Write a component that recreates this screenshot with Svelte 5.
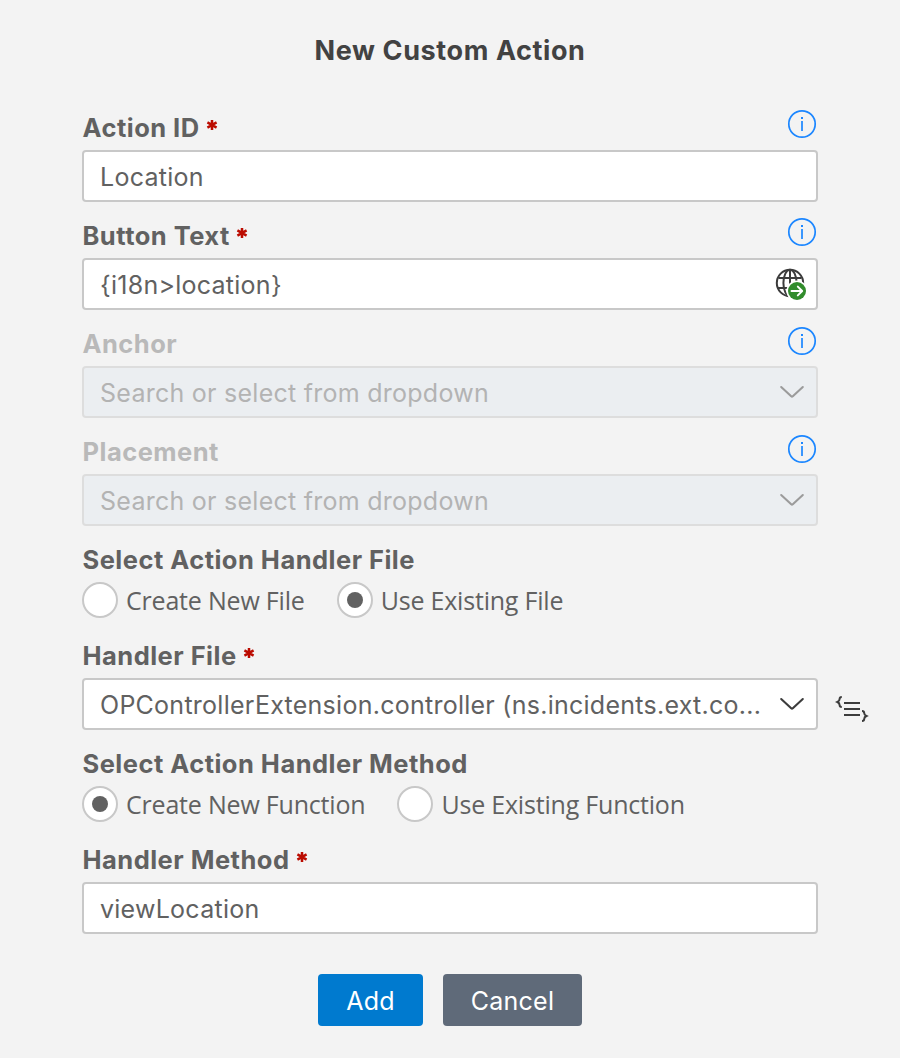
<script>
  let handlerFile = $state('existing');
  let handlerMethod = $state('new');
</script>

{#snippet info(drop)}
  <svg class="info" class:drop width="30" height="30" viewBox="0 0 30 30" fill="none" stroke="#1b86ff">
    <circle cx="15" cy="15" r="13.2" stroke-width="1.7" />
    <path d="M15 12v10" stroke-width="1.7" />
    <path d="M15 8v2" stroke-width="2" />
  </svg>
{/snippet}

{#snippet chevron()}
  <svg class="chevron" width="28" height="16" viewBox="0 0 28 16" fill="none" stroke="currentColor" stroke-width="2.1" stroke-linecap="round" stroke-linejoin="round">
    <path d="M3.2 3 13.2 12.2q.8.7 1.6 0L24.8 3" />
  </svg>
{/snippet}

{#snippet star()}
  <svg class="star" width="12" height="12" viewBox="0 0 12 12" fill="none" stroke="#bb0b00" stroke-width="2.5">
    <path d="M6 .9v10.2M1.4 3.4l9.2 5.2M1.4 8.6l9.2-5.2" />
  </svg>
{/snippet}

{#snippet radio(text, checked, pick)}
  <button class="radio" role="radio" aria-checked={checked} onclick={pick}>
    <span class="ring">{#if checked}<span class="dot"></span>{/if}</span>
    <span>{text}</span>
  </button>
{/snippet}

<main>
  <h1>New Custom Action</h1>

  <section>
    <div class="head"><span class="label">Action ID</span>{@render star()}{@render info(false)}</div>
    <div class="input"><span>Location</span></div>
  </section>

  <section>
    <div class="head"><span class="label">Button Text</span>{@render star()}{@render info(false)}</div>
    <div class="input">
      <span>{'{i18n>location}'}</span>
      <svg class="globe" width="32" height="34" viewBox="0 0 32 34" fill="none">
        <g stroke="#3c3c3c" stroke-width="2">
          <circle cx="15" cy="16" r="13.2" />
          <ellipse cx="15" cy="16" rx="6.6" ry="13.2" />
          <path d="M15 3v26M3.5 11h23M2 21h26" />
        </g>
        <circle cx="22" cy="24" r="10.6" fill="#fff" />
        <circle cx="22" cy="24" r="9" fill="#328c2d" />
        <path d="M16.5 24h10.5M22.8 19.6l4.4 4.4-4.4 4.4" stroke="#fff" stroke-width="1.9" stroke-linecap="round" stroke-linejoin="round" />
      </svg>
    </div>
  </section>

  <section class="disabled">
    <div class="head"><span class="label">Anchor</span>{@render info(true)}</div>
    <div class="input"><span>Search or select from dropdown</span>{@render chevron()}</div>
  </section>

  <section class="disabled">
    <div class="head"><span class="label">Placement</span>{@render info(true)}</div>
    <div class="input"><span>Search or select from dropdown</span>{@render chevron()}</div>
  </section>

  <section class="choices">
    <div class="head"><span class="label">Select Action Handler File</span></div>
    <div class="radios" role="radiogroup">
      {@render radio('Create New File', handlerFile === 'new', () => (handlerFile = 'new'))}
      {@render radio('Use Existing File', handlerFile === 'existing', () => (handlerFile = 'existing'))}
    </div>
  </section>

  <section>
    <div class="head"><span class="label">Handler File</span>{@render star()}</div>
    <div class="line">
      <div class="input dark"><span>OPControllerExtension.controller (ns.incidents.ext.co...</span>{@render chevron()}</div>
      <svg class="code" width="34" height="28" viewBox="0 0 34 28" fill="none" stroke="#3c3c3c" stroke-width="2">
        <path d="M9 9h16M9 15h16M9 21h16" />
        <path d="M6.8 3Q4.6 3 4.6 5T2.4 8q2.2 1 2.2 3t2.2 2M27 17q2.2 0 2.2 2t2.2 3q-2.2 1-2.2 3T27 27" />
      </svg>
    </div>
  </section>

  <section class="choices">
    <div class="head"><span class="label">Select Action Handler Method</span></div>
    <div class="radios" role="radiogroup">
      {@render radio('Create New Function', handlerMethod === 'new', () => (handlerMethod = 'new'))}
      {@render radio('Use Existing Function', handlerMethod === 'existing', () => (handlerMethod = 'existing'))}
    </div>
  </section>

  <section>
    <div class="head"><span class="label">Handler Method</span>{@render star()}</div>
    <div class="input"><span>viewLocation</span></div>
  </section>

  <footer>
    <button class="primary">Add</button>
    <button class="secondary">Cancel</button>
  </footer>
</main>

<style>
  :global(body) { background: #f3f3f3; }
  * { box-sizing: border-box; }
  main {
    width: 900px;
    height: 1058px;
    padding: 0 82px;
    background: #f3f3f3;
    color: #616161;
    font: 400 25px/32px Inter, sans-serif;
    letter-spacing: 0.26px;
    white-space: nowrap;
    overflow: hidden;
  }
  h1 {
    margin: 0;
    height: 102px;
    padding-top: 35px;
    text-align: center;
    font-size: 27px;
    line-height: 32px;
    font-weight: 700;
    letter-spacing: 0.6px;
    color: #424242;
  }
  section { padding-bottom: 8px; }
  .choices { padding-bottom: 12px; }
  .head { height: 48px; padding: 7px 1px 0 0.5px; display: flex; }
  .label { font-weight: 700; font-size: 25.5px; line-height: 38px; letter-spacing: 0.48px; }
  .star { margin: 10px 0 0 6.5px; }
  .info { margin-left: auto; }
  .info.drop { margin-top: 1px; }
  .disabled .label { color: #b9b9b9; }
  .input {
    width: 736px;
    height: 52px;
    flex: none;
    display: flex;
    align-items: center;
    justify-content: space-between;
    padding: 2px 10px 0 16px;
    background: #fff;
    border: 2px solid #c8c8c8;
    border-radius: 4px;
  }
  .disabled .input { background: #ebeef1; border-color: #dddddd; color: #b3b3b3; }
  .chevron { color: #9b9b9b; margin-top: -2px; }
  .dark .chevron { color: #3c3c3c; }
  .globe { margin-top: -3px; margin-right: -1px; }
  .line { display: flex; }
  .code { margin: 16px 0 0 17px; flex: none; }
  .radios { display: flex; gap: 32px; height: 36px; }
  .radio {
    display: flex;
    align-items: center;
    gap: 8px;
    padding: 0;
    border: 0;
    background: none;
    color: inherit;
    font: 400 25px/36px "Open Sans", sans-serif;
    letter-spacing: -0.2px;
  }
  .ring {
    width: 36px;
    height: 36px;
    display: grid;
    place-items: center;
    border: 2px solid #c8c8c8;
    border-radius: 50%;
    background: #fff;
  }
  .dot { width: 16px; height: 16px; border-radius: 50%; background: #616161; }
  footer { display: flex; justify-content: center; gap: 20px; padding-top: 32px; }
  footer button {
    height: 52px;
    padding: 2px 0 0;
    border: 0;
    border-radius: 4px;
    color: #fff;
    font: inherit;
    letter-spacing: 0.27px;
  }
  .primary { width: 105px; background: #007acf; }
  .secondary { width: 139px; background: #5f6a79; }
</style>
